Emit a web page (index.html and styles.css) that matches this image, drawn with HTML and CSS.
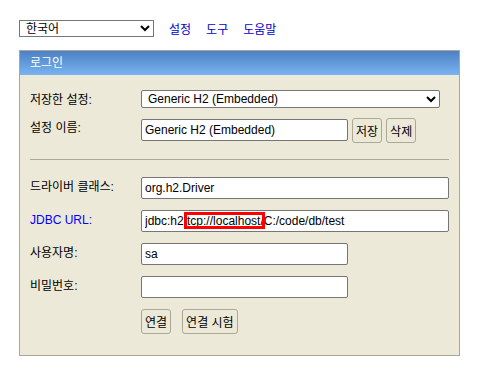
FILE: index.html
```html
<!DOCTYPE html>
<html lang="ko">
<head>
  <meta charset="UTF-8" />
  <title>H2 Console</title>
  <link rel="stylesheet" href="styles.css">
</head>
<body>

  <div class="toolbar">
    <select class="lang">
      <option>한국어</option>
    </select>
    <a href="#">설정</a>
    <a href="#">도구</a>
    <a href="#">도움말</a>
  </div>

  <div class="login">
    <div class="login-head">로그인</div>
    <div class="login-body">
      <div class="row row-saved">
        <label>저장한 설정:</label>
        <select class="wide-select">
          <option>Generic H2 (Embedded)</option>
        </select>
      </div>
      <div class="row row-name">
        <label>설정 이름:</label>
        <input type="text" class="short" value="Generic H2 (Embedded)" />
        <button>저장</button>
        <button>삭제</button>
      </div>

      <hr />

      <div class="row">
        <label>드라이버 클래스:</label>
        <input type="text" class="wide" value="org.h2.Driver" />
      </div>
      <div class="row">
        <label class="jdbc">JDBC URL:</label>
        <div class="url-wrap">
          <input type="text" class="wide" value="jdbc:h2:tcp://localhost/C:/code/db/test" />
          <span class="mark"></span>
        </div>
      </div>
      <div class="row">
        <label>사용자명:</label>
        <input type="text" class="short" value="sa" />
      </div>
      <div class="row">
        <label>비밀번호:</label>
        <input type="password" class="short" />
      </div>
      <div class="row row-actions">
        <label></label>
        <button>연결</button>
        <button class="test">연결 시험</button>
      </div>
    </div>
  </div>

</body>
</html>
```

FILE: styles.css
```css
body {
  margin: 0;
  font-family: "Liberation Sans", Arial, "Noto Sans CJK KR", sans-serif;
  font-size: 12px;
  color: #000;
  background: #fff;
}

.toolbar {
  display: flex;
  align-items: center;
  padding: 20px 0 0 19px;
  height: 17px;
}

.toolbar a {
  color: #0000cc;
  text-decoration: none;
  margin-left: 15px;
}

.lang {
  width: 135px;
  height: 17px;
  font: inherit;
  border: 1px solid #767676;
  border-radius: 0;
  padding: 0 0 0 2px;
  background: #fff;
}

.login {
  margin: 13px 0 0 19px;
  width: 439px;
  border: 1px solid #aca899;
  background: #ece9d8;
  height: 304px;
}

.login-head {
  height: 24px;
  line-height: 24px;
  padding-left: 10px;
  color: #fff;
  background: linear-gradient(#4c80c3, #7ab4f0);
}

.login-body {
  padding: 15px 10px 0 10px;
}

.row {
  display: flex;
  align-items: flex-start;
  gap: 4px;
  margin-bottom: 11px;
}

.row-saved {
  margin-bottom: 10px;
}

.row label {
  width: 111px;
  flex: none;
  margin-right: -4px;
  padding-top: 2px;
  line-height: 16px;
}

.jdbc {
  color: #0000ff;
}

input, select, button {
  font: inherit;
  color: #000;
  box-sizing: border-box;
  margin: 0;
}

input {
  height: 22px;
  border: 1px solid #767676;
  border-radius: 2px;
  padding: 0 3px;
  background: #fff;
}

.wide-select {
  width: 299px;
  height: 18px;
  border: 1px solid #767676;
  border-radius: 2px;
  background: #fff;
  padding: 0 2px;
}

.wide {
  width: 308px;
}

.short {
  width: 207px;
}

.row-name {
  margin-bottom: 0;
}

.row-name input {
  margin-top: 1px;
}

button {
  height: 25px;
  padding: 0 3px;
  background: #ece9d8;
  border: 1px solid #aca899;
  border-radius: 3px;
}

.row-actions {
  gap: 0;
}

.row-actions label {
  margin-right: 0;
}

.row-actions .test {
  margin-left: 11px;
}

hr {
  border: none;
  border-top: 1px solid #aca899;
  margin: 16px 0 17px 0;
}

.url-wrap {
  position: relative;
}

.mark {
  position: absolute;
  left: 43px;
  top: 2px;
  width: 75px;
  height: 11px;
  border: 3px solid #ff0000;
}
```
